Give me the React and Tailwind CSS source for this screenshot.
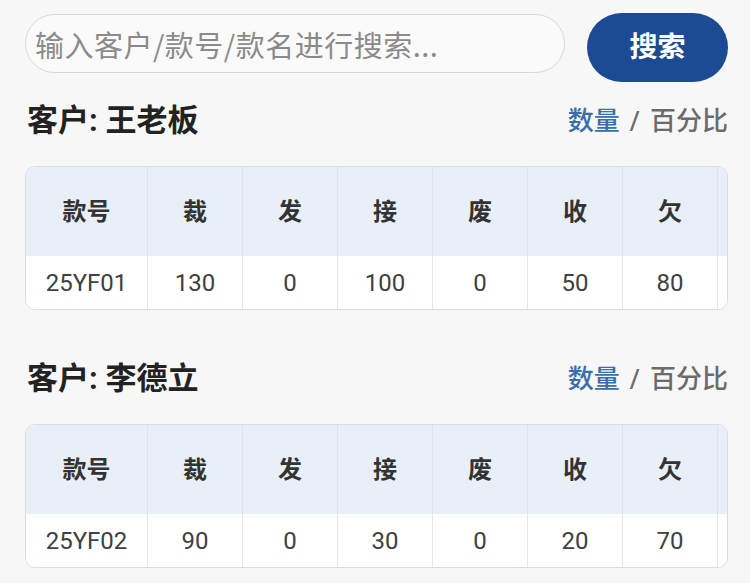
import React from "react";

const cols = ["款号", "裁", "发", "接", "废", "收", "欠", ""];

function Section({ name, row, first }) {
  return (
    <div className={first ? "mt-[19px]" : "mt-[49px]"}>
      <div className="flex items-center justify-between h-[40px]">
        <div className="pl-[2px] text-[31px] font-bold text-[#222] leading-[40px]">客户: {name}</div>
        <div className="text-[26px] font-medium leading-[40px] text-[#6b6b6b]">
          <span className="text-[#3a6ea8]">数量</span>
          <span className="mx-[10px]">/</span>
          <span>百分比</span>
        </div>
      </div>
      <div className="mt-[25px] rounded-[10px] border border-[#d6dee8] overflow-hidden bg-white">
        <div className="grid grid-cols-[122px_95px_95px_95px_95px_95px_95px_95px] w-max">
          {cols.map((c, i) => (
            <div
              key={"h" + i}
              className="h-[89px] bg-[#e9eff7] border-r border-[#dbe3ee] flex items-center justify-center text-[24px] font-semibold text-[#333]"
            >
              {c}
            </div>
          ))}
          {row.map((c, i) => (
            <div
              key={"d" + i}
              className="h-[53px] bg-white border-r border-[#e2e8ef] flex items-center justify-center text-[24px] text-[#404040]"
            >
              {c}
            </div>
          ))}
        </div>
      </div>
    </div>
  );
}

export default function App() {
  return (
    <div
      className="w-[750px] h-[583px] overflow-hidden bg-[#f7f7f8] pl-[25px] pr-[22px] pt-[13px]"
      style={{ fontFamily: 'Roboto, "Noto Sans CJK SC", sans-serif' }}
    >
      <div className="flex items-start gap-[22px]">
        <input
          className="mt-[1px] h-[59px] flex-1 rounded-full border border-[#d8d8d8] bg-[#fafafa] px-[9px] text-[29px] tracking-[0.5px] text-[#333] placeholder:text-[#8a8a8a] outline-none"
          placeholder="输入客户/款号/款名进行搜索..."
          style={{ fontFamily: '"Noto Sans CJK SC", sans-serif' }}
        />
        <button className="h-[69px] w-[141px] rounded-full bg-[#1c4b94] text-white text-[28px] font-bold">
          搜索
        </button>
      </div>
      <Section first name="王老板" row={["25YF01", "130", "0", "100", "0", "50", "80", ""]} />
      <Section name="李德立" row={["25YF02", "90", "0", "30", "0", "20", "70", ""]} />
    </div>
  );
}
